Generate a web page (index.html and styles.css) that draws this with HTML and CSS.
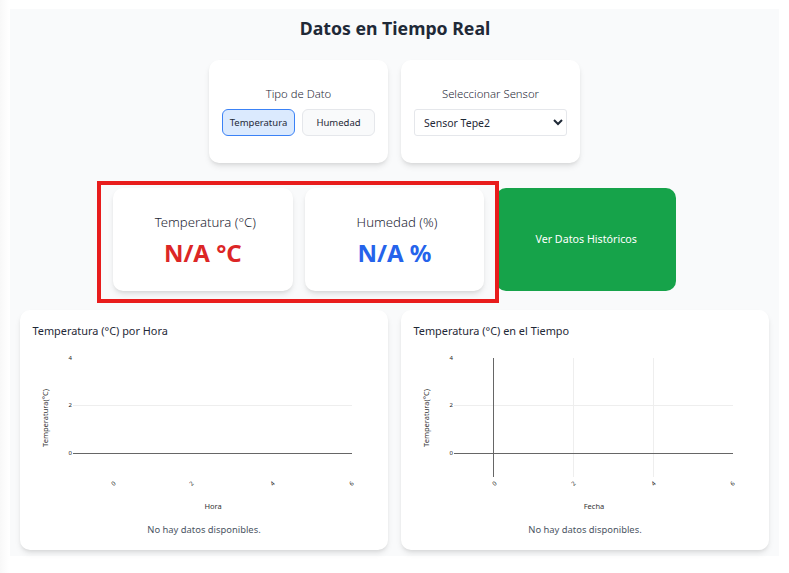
FILE: index.html
```html
<!DOCTYPE html>
<html lang="es">
<head>
<meta charset="utf-8">
<title>Datos en Tiempo Real</title>
<link rel="stylesheet" href="styles.css">
</head>
<body>
<main class="panel">
  <h1 class="title">Datos en Tiempo Real</h1>
  <section class="controls">
    <div class="card control">
      <div class="control-label">Tipo de Dato</div>
      <div class="toggle">
        <button class="toggle-btn active">Temperatura</button>
        <button class="toggle-btn">Humedad</button>
      </div>
    </div>
    <div class="card control">
      <div class="control-label">Seleccionar Sensor</div>
      <select class="sensor"><option>Sensor Tepe2</option></select>
    </div>
  </section>
  <section class="status">
    <div class="card reading">
      <div class="reading-label">Temperatura (°C)</div>
      <div class="reading-value red">N/A °C</div>
    </div>
    <div class="card reading">
      <div class="reading-label">Humedad (%)</div>
      <div class="reading-value blue">N/A %</div>
    </div>
    <button class="history">Ver Datos Históricos</button>
    <div class="highlight"></div>
  </section>
  <section class="charts">
    <article class="card chart">
      <h2 class="chart-title">Temperatura (°C) por Hora</h2>
      <svg class="plot" width="344" height="168" viewBox="0 0 344 168">
        <line class="grid" x1="41" y1="57.5" x2="320" y2="57.5"/>
        <line class="axis" x1="41" y1="105.5" x2="320" y2="105.5"/>
        <text class="tick" x="40" y="12" text-anchor="end">4</text>
        <text class="tick" x="40" y="59" text-anchor="end">2</text>
        <text class="tick" x="40" y="107" text-anchor="end">0</text>
        <text class="tick" text-anchor="middle" transform="translate(83 137) rotate(-45)">0</text>
        <text class="tick" text-anchor="middle" transform="translate(161 137) rotate(-45)">2</text>
        <text class="tick" text-anchor="middle" transform="translate(242 137) rotate(-45)">4</text>
        <text class="tick" text-anchor="middle" transform="translate(321 137) rotate(-45)">6</text>
        <text class="axis-label" x="181" y="161" text-anchor="middle">Hora</text>
        <text class="axis-label" text-anchor="middle" transform="translate(16 70) rotate(-90)">Temperatura(°C)</text>
      </svg>
      <p class="empty">No hay datos disponibles.</p>
    </article>
    <article class="card chart">
      <h2 class="chart-title">Temperatura (°C) en el Tiempo</h2>
      <svg class="plot" width="344" height="168" viewBox="0 0 344 168">
        <line class="grid" x1="41" y1="57.5" x2="320" y2="57.5"/>
        <line class="grid" x1="160.5" y1="10" x2="160.5" y2="129"/>
        <line class="grid" x1="240.5" y1="10" x2="240.5" y2="129"/>
        <line class="axis" x1="41" y1="105.5" x2="320" y2="105.5"/>
        <line class="axis" x1="80.5" y1="10" x2="80.5" y2="129"/>
        <text class="tick" x="40" y="12" text-anchor="end">4</text>
        <text class="tick" x="40" y="59" text-anchor="end">2</text>
        <text class="tick" x="40" y="107" text-anchor="end">0</text>
        <text class="tick" text-anchor="middle" transform="translate(83 137) rotate(-45)">0</text>
        <text class="tick" text-anchor="middle" transform="translate(162 137) rotate(-45)">2</text>
        <text class="tick" text-anchor="middle" transform="translate(242 137) rotate(-45)">4</text>
        <text class="tick" text-anchor="middle" transform="translate(321 137) rotate(-45)">6</text>
        <text class="axis-label" x="181" y="161" text-anchor="middle">Fecha</text>
        <text class="axis-label" text-anchor="middle" transform="translate(16 70) rotate(-90)">Temperatura(°C)</text>
      </svg>
      <p class="empty">No hay datos disponibles.</p>
    </article>
  </section>
</main>
</body>
</html>
```

FILE: styles.css
```css
* { box-sizing: border-box; }

html, body { margin: 0; padding: 0; }

html { background: #fff; }

body {
  min-height: 100vh;
  overflow: hidden;
  padding: 9px 10px 0;
  font-family: "Noto Sans", "Open Sans", sans-serif;
  color: #1f2937;
  background: linear-gradient(to right, #f8f8f8, #ffffff 9px);
}

.panel {
  padding: 7px 10px 6px;
  background: #f9fafb;
}

.title {
  margin: 0 0 20px;
  padding-left: 1px;
  font-size: 17.7px;
  line-height: 24px;
  font-weight: 700;
  text-align: center;
  color: #1f2937;
}

.card {
  background: #fff;
  border-radius: 10px;
  box-shadow: 0 4px 6px -1px rgba(0, 0, 0, .1), 0 2px 4px -2px rgba(0, 0, 0, .1);
}

.controls {
  display: grid;
  grid-template-columns: 179px 179px;
  gap: 13px;
  justify-content: center;
  margin-bottom: 25px;
}

.control {
  height: 103px;
  padding: 0 13px;
  display: flex;
  flex-direction: column;
  justify-content: center;
  align-items: center;
}

.control-label {
  font-size: 11.3px;
  line-height: 15px;
  margin-bottom: 8px;
  margin-top: -1px;
  font-weight: 300;
  color: #1f2937;
}

.toggle {
  display: flex;
  gap: 7px;
  width: 100%;
}

.toggle-btn {
  flex: 1;
  height: 27px;
  padding: 0;
  font: 9.5px "Noto Sans", sans-serif;
  color: #1f2937;
  background: #f9fafb;
  border: 1px solid #e5e7eb;
  border-radius: 6px;
}

.toggle-btn.active {
  background: #dbeafe;
  border-color: #3b82f6;
}

.sensor {
  width: 100%;
  height: 27px;
  padding: 0 5px;
  font: 10.5px "Noto Sans", sans-serif;
  color: #1f2937;
  background: #fff;
  border: 1px solid #e5e7eb;
  border-radius: 3px;
}

.status {
  position: relative;
  display: grid;
  grid-template-columns: repeat(3, 1fr);
  gap: 12px;
  width: 563px;
  margin: 0 auto 19px;
}

.reading {
  height: 103px;
  display: flex;
  flex-direction: column;
  align-items: center;
  justify-content: center;
  padding-top: 3px;
}

.reading-label {
  padding-left: 5px;
  font-size: 13.2px;
  line-height: 16px;
  margin-bottom: 7px;
  font-weight: 300;
  color: #1f2937;
}

.reading-value {
  font-size: 24px;
  line-height: 32px;
  font-weight: 700;
}

.red { color: #dc2626; }
.blue { color: #2563eb; }

.history {
  height: 103px;
  padding: 0 0 2px;
  font: 10.7px "Noto Sans", sans-serif;
  color: #fff;
  background: #16a34a;
  border: 0;
  border-radius: 10px;
}

.highlight {
  position: absolute;
  left: -16px;
  top: -7px;
  width: 402px;
  height: 122px;
  border: 4px solid #e81c1c;
}

.charts {
  display: grid;
  grid-template-columns: 368px 368px;
  gap: 13px;
}

.chart {
  height: 240px;
  padding: 13px 12px 0;
}

.chart-title {
  margin: 0;
  padding-left: .5px;
  font-size: 10.9px;
  line-height: 15px;
  font-weight: 400;
  color: #1f2937;
}

.plot {
  display: block;
  margin-top: 10px;
}

.grid { stroke: #eeeeee; stroke-width: 1; }
.axis { stroke: #666666; stroke-width: 1; }
.tick { font-size: 6px; fill: #222; }
.axis-label { font-size: 7.5px; fill: #333; }

.empty {
  margin: 6px 0 0;
  font-size: 9.4px;
  line-height: 16px;
  text-align: center;
  color: #4b5563;
}
```
